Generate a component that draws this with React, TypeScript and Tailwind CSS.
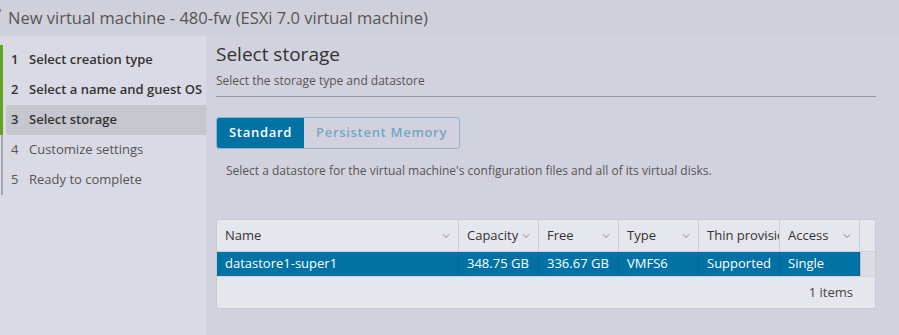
import { ChevronDown } from 'lucide-react';

const steps = [
  { n: 1, label: 'Select creation type', done: true },
  { n: 2, label: 'Select a name and guest OS', done: true },
  { n: 3, label: 'Select storage', done: true, active: true },
  { n: 4, label: 'Customize settings' },
  { n: 5, label: 'Ready to complete' },
];

const columns = [
  { key: 'name', label: 'Name', w: 'w-[242px]' },
  { key: 'capacity', label: 'Capacity', w: 'w-[80px]' },
  { key: 'free', label: 'Free', w: 'w-[80px]' },
  { key: 'type', label: 'Type', w: 'w-[80px]' },
  { key: 'thin', label: 'Thin provisioning', w: 'w-[81px]' },
  { key: 'access', label: 'Access', w: 'w-[80px]' },
];

const row: Record<string, string> = {
  name: 'datastore1-super1',
  capacity: '348.75 GB',
  free: '336.67 GB',
  type: 'VMFS6',
  thin: 'Supported',
  access: 'Single',
};

function Sidebar() {
  return (
    <div className="w-[206px] shrink-0 bg-[#dadae4] pt-[9px]">
      <div className="flex">
        <div className="flex w-[3px] flex-col">
          <div className="h-[90px] bg-[#62a420]" />
          <div className="ml-px h-[60px] w-[2px] bg-[#a8a8b0]" />
        </div>
        <div className="flex flex-1 flex-col">
          {steps.map((s) => (
            <div
              key={s.n}
              className={
                'flex h-[30px] items-center text-[13px] ' +
                (s.active ? 'ml-[3px] rounded-l-[3px] bg-[#c6c6ce] pl-[5px] ' : 'pl-[8px] ') +
                (s.done ? 'font-semibold text-[#333]' : 'text-[#555]')
              }
            >
              <span className="w-[18px] shrink-0">{s.n}</span>
              <span className="whitespace-nowrap">{s.label}</span>
            </div>
          ))}
        </div>
      </div>
    </div>
  );
}

function DatastoreGrid() {
  return (
    <div className="mt-[39px] w-[660px] overflow-hidden rounded-[3px] border border-[#c8c8d2] bg-[#e6e6ed] text-[13px]">
      <div className="flex h-[32px] border-b border-[#d0d0d8]">
        {columns.map((c) => (
          <div
            key={c.key}
            className={`${c.w} relative flex items-center overflow-hidden whitespace-nowrap border-r border-[#ccccd4] pl-[8px] text-[#333]`}
          >
            <span>{c.label}</span>
            <ChevronDown
              className="absolute right-[6px] top-1/2 h-[12px] w-[12px] -translate-y-1/2 text-[#666]"
              strokeWidth={1.5}
            />
          </div>
        ))}
        <div className="flex-1" />
      </div>
      <div className="flex h-[24px]">
        {columns.map((c) => (
          <div
            key={c.key}
            className={`${c.w} flex items-center whitespace-nowrap border-r border-[#0c6590] bg-[#0072a3] pl-[8px] text-white`}
          >
            {row[c.key]}
          </div>
        ))}
        <div className="flex-1 border-l border-[#c0c0c8] bg-[#dcdce4]" />
      </div>
      <div className="flex h-[32px] items-center justify-end border-t border-[#d6d6de] pr-[22px] text-[#444]">
        1 items
      </div>
    </div>
  );
}

export default function App() {
  return (
    <div className="flex h-[335px] w-[899px] flex-col overflow-hidden bg-[#d2d2de] font-['Open_Sans',sans-serif]">
      <div className="relative flex h-[36px] shrink-0 items-center bg-[#d0d0da] pl-[8px]">
        <div className="absolute left-0 top-[9px] h-[3px] w-px bg-[#888]" />
        <span className="text-[16.5px] text-[#555]">
          New virtual machine - 480-fw (ESXi 7.0 virtual machine)
        </span>
      </div>
      <div className="flex flex-1">
        <Sidebar />
        <div className="flex-1 pl-[10px] pt-[5px]">
          <h2 className="text-[19px] font-medium leading-[26px] text-[#333]">Select storage</h2>
          <p className="mt-[5px] text-[12px] text-[#555]">Select the storage type and datastore</p>
          <div className="mt-[6px] h-px w-[660px] bg-[#9a9aa4]" />
          <div className="mt-[20px] flex h-[32px] w-fit overflow-hidden rounded-[3px] border border-[#86b5cf] text-[13px] font-semibold tracking-[0.7px]">
            <div className="flex items-center bg-[#0072a3] px-[12px] text-white">Standard</div>
            <div className="flex items-center px-[12px] text-[#72a6c4]">Persistent Memory</div>
          </div>
          <p className="mt-[13px] pl-[10px] text-[12px] text-[#555]">
            Select a datastore for the virtual machine's configuration files and all of its virtual disks.
          </p>
          <DatastoreGrid />
        </div>
      </div>
    </div>
  );
}
